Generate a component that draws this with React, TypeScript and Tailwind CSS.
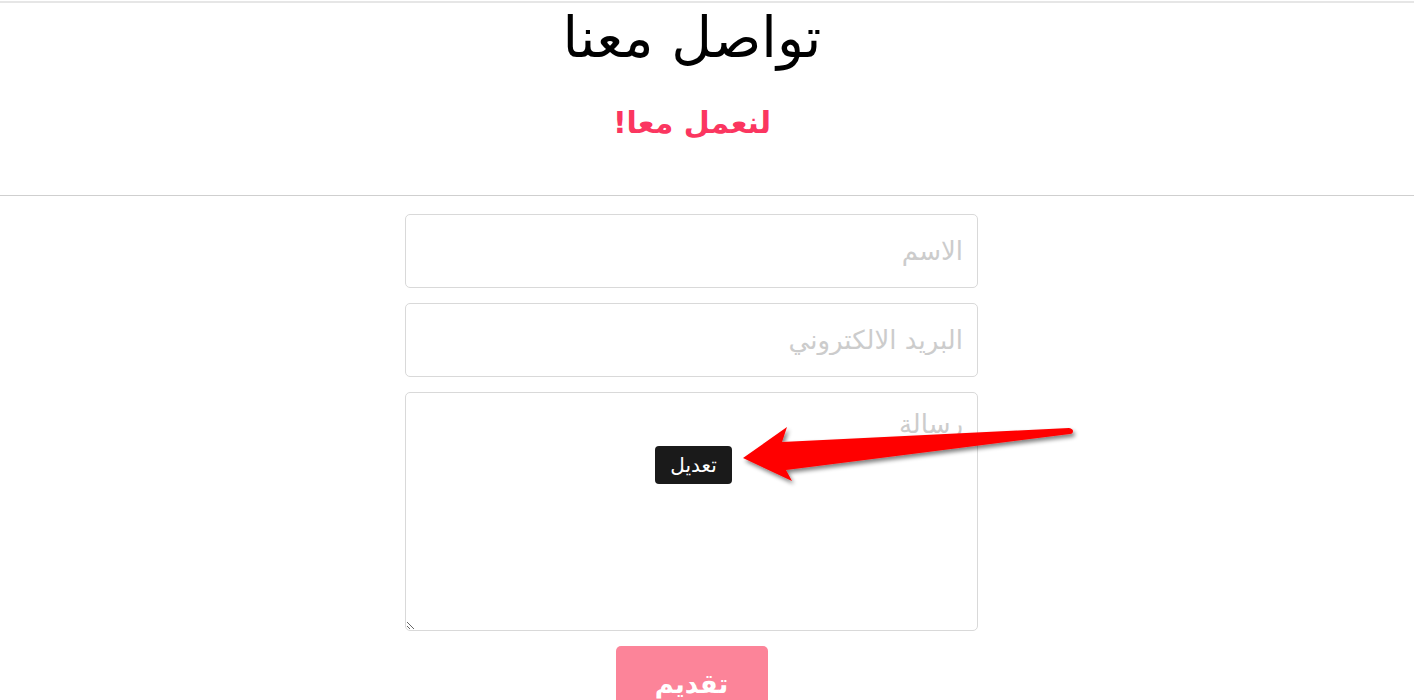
import React from "react";

export default function App() {
  const font = { fontFamily: '"DejaVu Sans", "Noto Sans", sans-serif' };
  return (
    <div dir="ltr" className="relative w-[1414px] h-[700px] overflow-hidden bg-white" style={font}>
      <div className="mt-px border-t-2 border-[#e6e6e6] border-b border-b-[#cfcfcf]">
        <div className="w-[1384px] flex flex-col items-center h-[192px]">
          <h1 dir="rtl" className="mt-[0px] text-[56px] leading-[70px] text-black font-normal">تواصل معنا</h1>
          <h2 dir="rtl" className="mt-[30px] text-[30px] leading-[40px] font-bold text-[#fb3660]">لنعمل معا!</h2>
        </div>
      </div>
      <div className="w-[1383px] flex flex-col items-center pt-[18px]">
        <div className="w-[573px] flex flex-col gap-[15px]">
          <input
            dir="rtl"
            placeholder="الاسم"
            className="h-[74px] w-full rounded-[5px] border border-[#d9d9d9] px-[14px] text-[26px] placeholder:text-[#cccccc] outline-none"
          />
          <input
            dir="rtl"
            placeholder="البريد الالكتروني"
            className="h-[74px] w-full rounded-[5px] border border-[#d9d9d9] px-[14px] text-[26px] placeholder:text-[#cccccc] outline-none"
          />
          <textarea
            dir="rtl"
            placeholder="رسالة"
            className="h-[239px] w-full rounded-[5px] border border-[#d9d9d9] px-[14px] pt-[14px] text-[26px] leading-[34px] placeholder:text-[#cccccc] outline-none resize"
          />
        </div>
        <button dir="rtl" className="mt-[15px] w-[152px] h-[70px] rounded-[5px] bg-[#fc8499] text-white text-[26px] font-bold leading-[34px] flex items-start justify-center pt-[21px]">
          تقديم
        </button>
      </div>

      <div dir="rtl" className="absolute left-[655px] top-[446px] w-[77px] h-[38px] rounded-[4px] bg-[#1a1a1a] text-white text-[20px] flex items-center justify-center">
        تعديل
      </div>

      <svg className="absolute left-0 top-0 pointer-events-none" width="1414" height="700">
        <defs>
          <filter id="sh" x="-10%" y="-50%" width="130%" height="200%">
            <feGaussianBlur in="SourceAlpha" stdDeviation="2" />
            <feOffset dx="2" dy="3" result="b" />
            <feComponentTransfer>
              <feFuncA type="linear" slope="0.5" />
            </feComponentTransfer>
            <feMerge>
              <feMergeNode />
              <feMergeNode in="SourceGraphic" />
            </feMerge>
          </filter>
        </defs>
        <path
          filter="url(#sh)"
          fill="#ff0000"
          d="M1069 428 Q1073 429 1073 431 Q1073 434 1070 434 L786 470 L792 481 L743 458 L787 427 L782 442 Z"
        />
      </svg>
    </div>
  );
}
